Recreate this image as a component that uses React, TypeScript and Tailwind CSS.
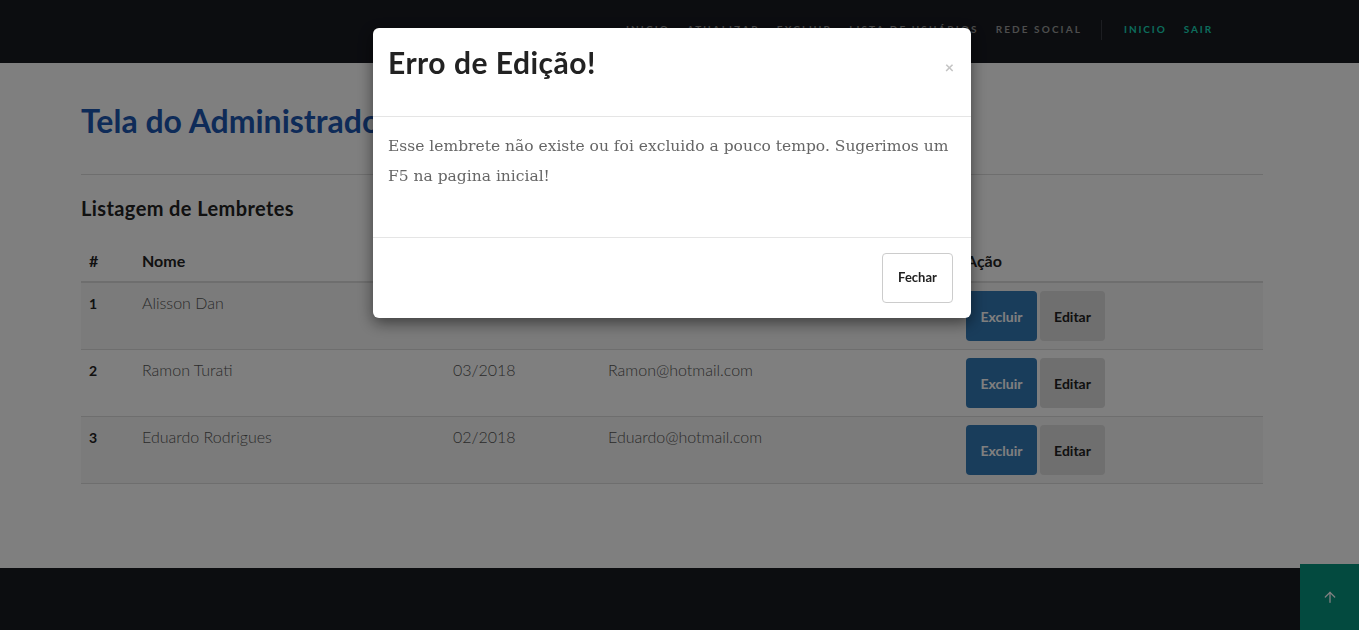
const rows = [
  { id: 1, nome: "Alisson Dan", data: "01/2018", email: "Alisson@hotmail.com" },
  { id: 2, nome: "Ramon Turati", data: "03/2018", email: "Ramon@hotmail.com" },
  { id: 3, nome: "Eduardo Rodrigues", data: "02/2018", email: "Eduardo@hotmail.com" },
];

const navLinks = ["Inicio", "Atualizar", "Excluir", "Lista de Usuários", "Rede Social"];

export default function App() {
  return (
    <div className="relative min-h-screen bg-white font-['Lato','Open_Sans',sans-serif] text-[#333]">
      {/* navbar */}
      <header className="h-[63px] bg-[#181a21] flex items-center justify-end pr-[146px] pb-[4px]">
        <nav className="flex items-center gap-[17px] text-[10px] font-bold uppercase tracking-[2.1px] text-[#9a9a9a]">
          {navLinks.map((l) => (
            <a key={l} href="#">{l}</a>
          ))}
        </nav>
        <span className="ml-[19px] mr-[22px] h-[20px] w-px bg-[#3a3c44]" />
        <div className="flex items-center gap-[17px] text-[10px] font-bold uppercase tracking-[1.9px] text-[#1ad8b8]">
          <a href="#">Inicio</a>
          <a href="#">Sair</a>
        </div>
      </header>

      <main className="mx-[81px] w-[1182px] pt-[40px] h-[505px]">
        <h1 className="text-[32px] font-bold leading-[1.1] text-[#1c56b0]">Tela do Administrador</h1>
        <hr className="mt-[36px] border-[#ddd]" />
        <h3 className="mt-[18px] text-[20px] font-bold tracking-[0.4px] text-[#222]">Listagem de Lembretes</h3>
        <table className="mt-[18px] w-full border-collapse text-left">
          <thead>
            <tr className="border-b-2 border-[#ddd] text-[16px] font-bold text-[#222]">
              <th className="w-[53px] px-[8px] py-[8px]">#</th>
              <th className="w-[311px] px-[8px] py-[8px]">Nome</th>
              <th className="w-[155px] px-[8px] py-[8px]">Data</th>
              <th className="w-[358px] px-[8px] py-[8px]">E-mail</th>
              <th className="px-[8px] py-[8px]">Ação</th>
            </tr>
          </thead>
          <tbody>
            {rows.map((r, i) => (
              <tr key={r.id} className={`border-b border-[#ddd] align-top ${i % 2 === 0 ? "bg-[#f7f7f7]" : "bg-white"}`}>
                <td className="px-[8px] pt-[10px] text-[14px] font-bold text-[#222]">{r.id}</td>
                <td className="px-[8px] pt-[8px] text-[16px] font-light text-[#555]">{r.nome}</td>
                <td className="px-[8px] pt-[8px] text-[16px] font-light text-[#555]">{r.data}</td>
                <td className="px-[8px] pt-[8px] text-[16px] font-light text-[#555]">{r.email}</td>
                <td className="px-[8px] py-[8px]">
                  <div className="flex gap-[3px]">
                    <button className="h-[50px] w-[71px] rounded-[4px] bg-[#337ab7] text-[14px] font-bold text-white">Excluir</button>
                    <button className="h-[50px] w-[65px] rounded-[4px] bg-[#dedede] text-[14px] font-bold text-[#222]">Editar</button>
                  </div>
                </td>
              </tr>
            ))}
          </tbody>
        </table>
      </main>

      <footer className="h-[62px] bg-[#181a21]" />

      <button className="fixed bottom-0 right-0 flex h-[66px] w-[59px] items-center justify-center bg-[#07947f] text-white">
        <svg viewBox="0 0 24 24" className="h-[16px] w-[16px]" fill="none" stroke="currentColor" strokeWidth="2" strokeLinecap="round">
          <path d="M12 20V5" />
          <path d="M5 12l7-7 7 7" />
        </svg>
      </button>

      {/* backdrop */}
      <div className="fixed inset-0 bg-black/50" />

      {/* modal */}
      <div className="fixed left-[373px] top-[28px] w-[598px] rounded-[6px] bg-white shadow-[0_5px_15px_rgba(0,0,0,0.5)]">
        <div className="flex items-start justify-between border-b border-[#e5e5e5] px-[15px] pt-[16px] h-[89px]">
          <h4 className="text-[30px] font-bold leading-[1.2] tracking-[0.5px] text-[#222]">Erro de Edição!</h4>
          <button className="mt-[15px] mr-[2px] text-[16px] font-bold leading-none text-[#c4c4c4]">×</button>
        </div>
        <div className="h-[120px] px-[15px] pt-[14px]">
          <p className="font-['DejaVu_Serif',serif] text-[15.5px] leading-[30px] text-[#666]">
            Esse lembrete não existe ou foi excluido a pouco tempo. Sugerimos um F5 na pagina inicial!
          </p>
        </div>
        <div className="flex justify-end border-t border-[#e5e5e5] px-[18px] pt-[15px] pb-[15px]">
          <button className="h-[50px] w-[71px] rounded-[4px] border border-[#ccc] bg-white text-[13px] font-bold text-[#222]">Fechar</button>
        </div>
      </div>
    </div>
  );
}
